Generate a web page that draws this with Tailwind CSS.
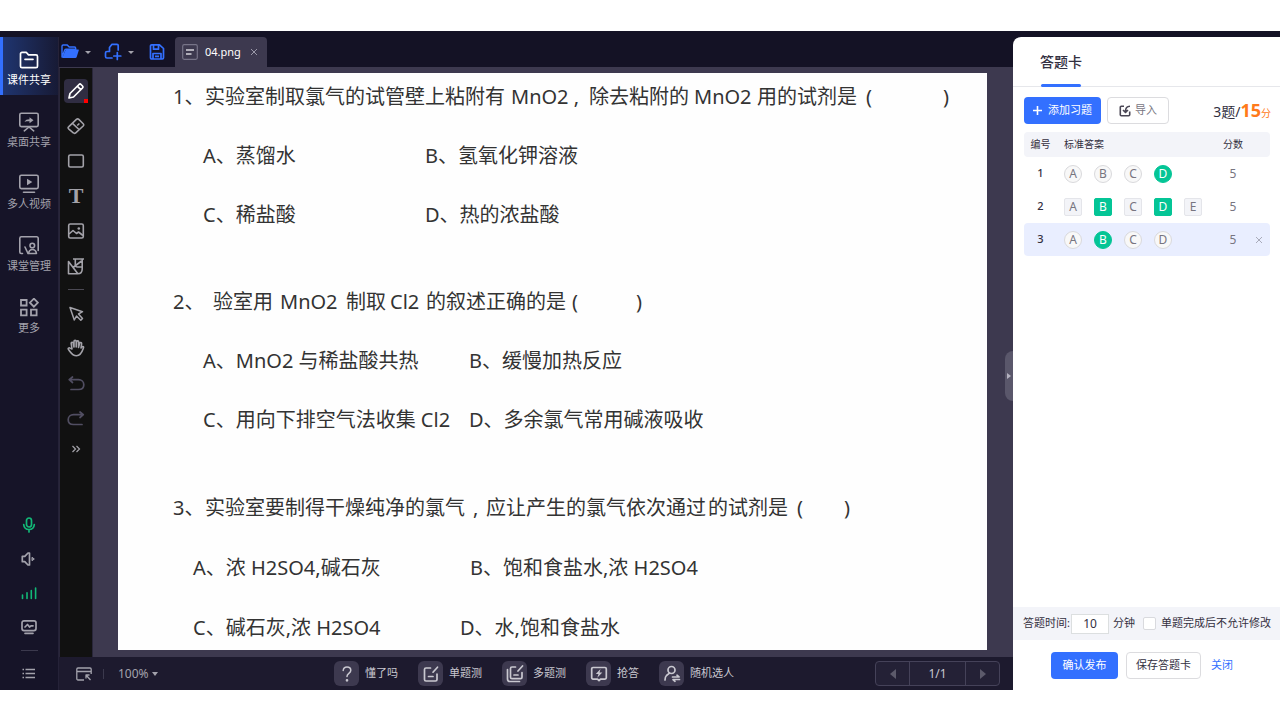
<!DOCTYPE html>
<html lang="zh-CN">
<head>
<meta charset="utf-8">
<meta name="viewport" content="width=device-width, initial-scale=1">
<title>课件共享</title>
<script src="https://cdn.jsdelivr.net/npm/@tailwindcss/browser@4"></script>
</head>
<body class="flex min-h-screen flex-col bg-white pt-[31px] pb-[30px] font-['Noto_Sans','Noto_Sans_CJK_SC',sans-serif] text-[11px]">
<div class="flex flex-1 bg-[#141225] pt-[6px]">

  <!-- Main navigation -->
  <nav class="flex w-[59px] shrink-0 flex-col border-r border-[#252238] bg-[#161428] text-[#a3a2ac]">
    <div class="flex flex-col gap-1">
      <button class="flex h-[58px] flex-col items-center gap-[2px] border-l-[3px] border-[#3370ff] bg-linear-to-r from-[#1f3570] to-[#171a35] pt-[13px] pr-[3px] leading-4 text-white">
        <svg class="h-5 w-5 shrink-0" viewBox="0 0 20 20" fill="none" stroke="currentColor" stroke-width="1.7" stroke-linejoin="round" stroke-linecap="round"><path d="M1.500 3.800a1.500 1.500 0 0 1 1.500-1.500h4.200l2.300 2.600H17a1.500 1.500 0 0 1 1.500 1.500v9.800a1.500 1.500 0 0 1-1.500 1.500H3a1.500 1.500 0 0 1-1.500-1.500zM6 9.300h8"/></svg>
        <span class="whitespace-nowrap">课件共享</span>
      </button>
      <button class="flex h-[58px] flex-col items-center gap-[2px] pt-[13px] leading-4">
        <svg class="h-5 w-5 shrink-0" viewBox="0 0 20 20" fill="none" stroke="currentColor" stroke-width="1.6" stroke-linejoin="round" stroke-linecap="round"><rect x="0.8" y="1.2" width="18.4" height="13.4" rx="1.5"/><path d="M10 15l-4.700 3.800M10 15l4.700 3.800"/><path d="M5.500 10c1-2 2.500-2.700 5-2.700V5.200L14.500 8.200l-4 3V9.200c-2 0-3.500 0-5 .8z" fill="currentColor" stroke="none"/></svg>
        <span class="whitespace-nowrap">桌面共享</span>
      </button>
      <button class="flex h-[58px] flex-col items-center gap-[2px] pt-[13px] leading-4">
        <svg class="h-5 w-5 shrink-0" viewBox="0 0 20 20" fill="none" stroke="currentColor" stroke-width="1.6" stroke-linejoin="round" stroke-linecap="round"><rect x="0.8" y="1.2" width="18.4" height="13.4" rx="1.5"/><path d="M4.500 18.300h11"/><path d="M8 4.800l5.300 3.200L8 11.200z" fill="currentColor" stroke="none"/></svg>
        <span class="whitespace-nowrap">多人视频</span>
      </button>
      <button class="flex h-[58px] flex-col items-center gap-[2px] pt-[13px] leading-4">
        <svg class="h-5 w-5 shrink-0" viewBox="0 0 20 20" fill="none" stroke="currentColor" stroke-width="1.6" stroke-linejoin="round" stroke-linecap="round"><path d="M3.500 17.500H2.300A1.500 1.500 0 0 1 .8 16V2.200A1.500 1.500 0 0 1 2.300.8h15.400a1.500 1.500 0 0 1 1.500 1.500v12.200M6 11l3 6.500"/><circle cx="13.300" cy="9.500" r="2.300"/><path d="M9.500 17.500c.5-2.800 2-4 3.900-4s3.600 1.200 4.100 4z"/></svg>
        <span class="whitespace-nowrap">课堂管理</span>
      </button>
      <button class="flex h-[58px] flex-col items-center gap-[2px] pt-[13px] leading-4">
        <svg class="h-5 w-5 shrink-0" viewBox="0 0 20 20" fill="none" stroke="currentColor" stroke-width="1.800"><path d="M2 2h5.600v5.500H2zM2 11.700h5.600v5.600H2zM12 11.700h5.600v5.600H12zM14.900.7l4 4-4 4-4-4z"/></svg>
        <span class="whitespace-nowrap">更多</span>
      </button>
    </div>
    <div class="mt-auto flex flex-col items-center gap-4 pb-[7px]">
      <button aria-label="麦克风" class="text-[#12b877]"><svg class="h-[18px] w-[18px]" viewBox="0 0 18 18" fill="none" stroke="currentColor" stroke-width="1.700" stroke-linecap="round"><rect x="6.500" y="2" width="5" height="9" rx="2.500"/><path d="M3.700 8.500c.3 3.400 2.300 5 5.300 5s5-1.600 5.300-5M9 13.500v2.500"/></svg></button>
      <button aria-label="扬声器"><svg class="h-[18px] w-[18px]" viewBox="0 0 18 18" fill="none" stroke="currentColor" stroke-width="1.700" stroke-linejoin="round" stroke-linecap="round"><path d="M2.300 6.300h2.500L8 3h1.500v12H8l-3.200-3.300H2.300z"/><path d="M12.300 7.500l2 1.500-2 1.500z" fill="currentColor" stroke-width="1"/></svg></button>
      <button aria-label="网络" class="text-[#12b877]"><svg class="h-[18px] w-[18px]" viewBox="0 0 18 18" fill="none" stroke="currentColor" stroke-width="1.600" stroke-linecap="round"><path d="M2.500 11v3.500M7 8.800v5.700M11.300 6.500v8M15.600 4v10.500"/></svg></button>
      <button aria-label="监控"><svg class="h-[18px] w-[18px]" viewBox="0 0 18 18" fill="none" stroke="currentColor" stroke-width="1.700" stroke-linejoin="round" stroke-linecap="round"><rect x="2" y="2.800" width="14" height="9.800" rx="2"/><path d="M5 9l2.500-2.500L9.500 9l1.500-1.200h2M5 15.300h8"/></svg></button>
      <hr class="-my-[2px] w-[17px] border-[#3b394d]">
      <button aria-label="列表"><svg class="h-[18px] w-[18px]" viewBox="0 0 18 18" fill="none" stroke="currentColor" stroke-width="1.500"><path d="M2.500 4.500h1.500M2.500 8.500h1.500M2.500 12.500h1.500M5.500 4.500h9.500M5.500 8.500h9.500M5.500 12.500h9.500"/></svg></button>
    </div>
  </nav>

  <!-- Workspace -->
  <main class="flex min-w-0 flex-1 flex-col">
    <header class="flex h-[30px] shrink-0 items-center text-[#3370ff]">
      <button aria-label="打开" class="ml-[2px] flex items-center gap-[6px]">
        <svg class="h-[18px] w-[18px]" viewBox="0 0 18 18"><path d="M1 14.500V3.200C1 2.500 1.500 2 2.200 2h4l2 2h5.300c.7 0 1.200.5 1.200 1.200v1H5.200c-.8 0-1.300.3-1.600 1z" fill="none" stroke="currentColor" stroke-width="1.400"/><path d="M4.800 6.500h12.500c.5 0 .7.3.5.8L15.700 14c-.2.700-.7 1-1.400 1H1.200z" fill="currentColor"/></svg>
        <svg class="h-[3px] w-[6px] text-[#a3a2ac]" viewBox="0 0 6 3"><path d="M0 0h6L3 3z" fill="currentColor"/></svg>
      </button>
      <button aria-label="新建" class="ml-[13px] flex items-center gap-[6px]">
        <svg class="h-[18px] w-[18px]" viewBox="0 0 18 18" fill="none" stroke="currentColor" stroke-width="1.700" stroke-linejoin="round" stroke-linecap="round"><path d="M8 15H3c-1 0-1.500-.5-1.500-1.500V10c0-.8.5-1.500 1.500-1.500h2.500v-4L8 1.300h5c.7 0 1.200.4 1.200 1.200V7M13.300 9.500v7M9.800 13h7"/></svg>
        <svg class="h-[3px] w-[6px] text-[#a3a2ac]" viewBox="0 0 6 3"><path d="M0 0h6L3 3z" fill="currentColor"/></svg>
      </button>
      <button aria-label="保存" class="ml-[14px]">
        <svg class="h-[18px] w-[18px]" viewBox="0 0 18 18" fill="none" stroke="currentColor" stroke-width="1.700" stroke-linejoin="round"><path d="M2.500 3c0-.7.5-1.200 1.200-1.200h7.800l4 3.700v9.300c0 .7-.5 1.200-1.200 1.200H3.700c-.7 0-1.200-.5-1.200-1.200zM5.500 2v4.200h5V2M5 16v-5.500h8V16M7 13.300h4"/></svg>
      </button>
      <div class="ml-[9px] flex h-[30px] items-center rounded-t bg-[#3d394f] pr-2 pl-[7px] text-white">
        <svg class="h-4 w-4 text-[#d5d4dc]" viewBox="0 0 16 16" fill="none" stroke="currentColor"><rect x="0.700" y="0.700" width="14.600" height="14.600" rx="1.500" stroke="#777488" stroke-width="1.200"/><path d="M4 6h8M4 10h5.500" stroke-width="1.600"/></svg>
        <span class="mr-2 ml-[7px]">04.png</span>
        <button aria-label="关闭标签" class="text-[#9a98a8]"><svg class="h-[10px] w-[10px]" viewBox="0 0 10 10" fill="none" stroke="currentColor"><path d="M2 2l6 6M8 2l-6 6"/></svg></button>
      </div>
    </header>

    <div class="flex min-h-0 flex-1 bg-[#3d394f]">
      <!-- Drawing tools -->
      <aside class="mt-px flex w-[34px] shrink-0 flex-col items-center gap-[11px] border-x border-[#29263a] bg-[#111] pt-[11px] text-[#a3a2a9]">
        <button aria-label="画笔" class="relative flex h-6 w-6 items-center justify-center rounded bg-[#302d42] text-white">
          <svg class="h-[18px] w-[18px]" viewBox="0 0 18 18" fill="none" stroke="currentColor" stroke-width="1.700" stroke-linejoin="round"><path d="M2 16l1-4.500L12 2.500c.6-.6 1.400-.6 2 0l1.500 1.500c.6.6.6 1.400 0 2L6.500 15zM10.500 4.300l3.300 3.300"/></svg>
          <span class="absolute right-0 bottom-0 h-1 w-1 bg-[#ff0000]"></span>
        </button>
        <button aria-label="橡皮" class="flex h-6 w-6 items-center justify-center"><svg class="h-[18px] w-[18px]" viewBox="0 0 18 18" fill="none" stroke="currentColor" stroke-width="1.600" stroke-linejoin="round"><path d="M1.600 9.800l7.800-7.400c.8-.7 1.700-.7 2.400 0l4.400 4.300c.7.700.7 1.600 0 2.300l-7.500 6.800c-.8.700-1.700.7-2.400 0l-4.700-4c-.7-.7-.7-1.400 0-2zM5.500 6.300l6.500 6.200M10.200 8.500l2.200-2"/></svg></button>
        <button aria-label="矩形" class="flex h-6 w-6 items-center justify-center"><svg class="h-[18px] w-[18px]" viewBox="0 0 18 18" fill="none" stroke="currentColor" stroke-width="1.600"><rect x="1.700" y="3" width="14.600" height="12" rx="1.500"/></svg></button>
        <button aria-label="文字" class="flex h-6 w-6 items-center justify-center font-['Liberation_Serif',serif] text-[22px] leading-6 font-bold">T</button>
        <button aria-label="图片" class="flex h-6 w-6 items-center justify-center"><svg class="h-[18px] w-[18px]" viewBox="0 0 18 18" fill="none" stroke="currentColor" stroke-width="1.600" stroke-linejoin="round"><rect x="1.700" y="2" width="14.600" height="14" rx="1.500"/><path d="M2 12l4-3.500 3.500 3 2-1.500 4.500 3.500"/><circle cx="11.800" cy="6.500" r="1.300" fill="currentColor" stroke="none"/></svg></button>
        <button aria-label="学科工具" class="flex h-6 w-6 items-center justify-center"><svg class="h-[18px] w-[18px]" viewBox="0 0 18 18" fill="none" stroke="currentColor" stroke-width="1.600" stroke-linejoin="round"><path d="M6 2h11M8.300 2v6c0 1.200 1 2 2.200 2h4.700M15.200 2v10c0 2.800-1.700 4.700-4.500 4.700H1.500V4.500l9.200 12M14.500 4L6 10.500"/></svg></button>
        <hr class="w-4 border-[#4b4954]">
        <button aria-label="选择" class="flex h-6 w-6 items-center justify-center"><svg class="h-[18px] w-[18px]" viewBox="0 0 18 18" fill="none" stroke="currentColor" stroke-width="1.500" stroke-linejoin="round"><path d="M3 3.500l12.500 4.200-4 2.300 4 4.500-1.700 1.800-4.300-4.300-2.200 4z"/></svg></button>
        <button aria-label="移动" class="flex h-6 w-6 items-center justify-center"><svg class="h-[18px] w-[18px]" viewBox="0 0 18 18" fill="none" stroke="currentColor" stroke-width="1.600" stroke-linejoin="round" stroke-linecap="round"><path d="M5 10L4.200 4.500c-.1-1.500 1.700-1.700 2-.3L7 8V2.500c0-1.500 2.200-1.500 2.200 0V8l.4-5.200c.2-1.400 2.200-1.200 2.100.2L11.500 8.500l1.100-4.200c.4-1.300 2.200-.9 2 .5l-.600 4.200 1-1.200c1-.8 1.900 0 1.400 1.200-1 2.800-1.900 7.700-6.900 7.700-4.200 0-5.200-2.500-8-6.200-.8-1 .5-2.200 1.600-1.400z"/></svg></button>
        <button aria-label="撤销" class="flex h-6 w-6 items-center justify-center text-[#514e62]"><svg class="h-[18px] w-[18px]" viewBox="0 0 18 18" fill="none" stroke="currentColor" stroke-width="1.700" stroke-linejoin="round" stroke-linecap="round"><path d="M5.500 3L2.200 5.700l3.300 2.800M2.500 5.700h9c3 0 5.300 2 5.300 5s-2.300 4.800-5.300 4.800H4"/></svg></button>
        <button aria-label="重做" class="flex h-6 w-6 items-center justify-center text-[#514e62]"><svg class="h-[18px] w-[18px]" viewBox="0 0 18 18" fill="none" stroke="currentColor" stroke-width="1.700" stroke-linejoin="round" stroke-linecap="round"><path d="M13 3l3.300 2.700L13 8.500M16 5.700H6.500c-3 0-5.300 2-5.300 5s2.300 4.800 5.300 4.800H15"/></svg></button>
        <button aria-label="更多工具" class="flex h-4 w-6 items-center justify-center"><svg class="h-[10px] w-[10px]" viewBox="0 0 10 10" fill="none" stroke="currentColor" stroke-width="1.200"><path d="M1.500 2l3 3-3 3M5.500 2l3 3-3 3"/></svg></button>
      </aside>

      <!-- Courseware page -->
      <div class="relative min-w-0 flex-1 pt-[6px] pr-[26px] pb-[7px] pl-[25px]">
        <article class="flex h-full flex-col gap-[57px] overflow-hidden bg-[#fefefe] pt-[9px] pl-[55px] text-xl leading-[30px] whitespace-nowrap text-[#333]">
          <section class="flex flex-col gap-[29px]">
            <h2 class="flex"><span class="w-8">1、</span><span class="w-[306px]">实验室制取氯气的试管壁上粘附有</span><span class="w-[78px]">MnO2 ,</span><span class="w-[105px]">除去粘附的</span><span class="w-[63px]">MnO2</span><span class="w-[109px]">用的试剂是</span><span class="w-[77px]">(</span><span>)</span></h2>
            <p class="flex pl-[30px]"><span class="w-[222px]">A、蒸馏水</span><span>B、氢氧化钾溶液</span></p>
            <p class="flex pl-[30px]"><span class="w-[222px]">C、稀盐酸</span><span>D、热的浓盐酸</span></p>
          </section>
          <section class="flex flex-col gap-[29px]">
            <h2 class="flex"><span class="w-10">2、</span><span class="w-[67px]">验室用</span><span class="w-[66px]">MnO2</span><span class="w-11">制取</span><span class="w-9">Cl2</span><span class="w-[146px]">的叙述正确的是</span><span class="w-16">(</span><span>)</span></h2>
            <p class="flex pl-[30px]"><span class="w-[266px]">A、MnO2 与稀盐酸共热</span><span>B、缓慢加热反应</span></p>
            <p class="flex pl-[30px]"><span class="w-[266px]">C、用向下排空气法收集 Cl2</span><span>D、多余氯气常用碱液吸收</span></p>
          </section>
          <section class="mt-px flex flex-col gap-[30px]">
            <h2 class="flex"><span class="w-8">3、</span><span class="w-[268px]">实验室要制得干燥纯净的氯气</span><span class="w-[13px]">,</span><span class="w-[222px]">应让产生的氯气依次通过</span><span class="w-[89px]">的试剂是</span><span class="w-[47px]">(</span><span>)</span></h2>
            <p class="flex pl-5"><span class="w-[277px]">A、浓 H2SO4,碱石灰</span><span>B、饱和食盐水,浓 H2SO4</span></p>
            <p class="flex pl-5"><span class="w-[267px]">C、碱石灰,浓 H2SO4</span><span>D、水,饱和食盐水</span></p>
          </section>
        </article>
        <button aria-label="收起面板" class="absolute top-[284px] right-0 flex h-[50px] w-2 items-center justify-center rounded-l-lg bg-[#5a576b] text-[#b4b2c0]"><svg class="h-[6px] w-1" viewBox="0 0 4 6"><path d="M0 0l4 3-4 3z" fill="currentColor"/></svg></button>
      </div>
    </div>

    <footer class="flex h-[33px] shrink-0 items-center bg-[#1d1a2e] text-[#c9c8d0]">
      <div class="flex flex-1 items-center pl-4 text-[#a3a2ac]">
        <button aria-label="窗口"><svg class="h-[18px] w-[18px]" viewBox="0 0 18 18" fill="none" stroke="currentColor" stroke-width="1.300" stroke-linejoin="round"><path d="M9 15H3c-.7 0-1.200-.5-1.200-1.200V4.200C1.800 3.500 2.300 3 3 3h12c.7 0 1.200.5 1.200 1.200V9M1.800 6.500h14.400M11 10l4.500 5M11 13.500V10h3.500"/></svg></button>
        <span class="mx-[10px] h-[10px] w-px bg-[#3b394d]"></span>
        <button class="ml-1 flex items-center gap-[3px] text-xs">100%<svg class="h-1 w-[6px]" viewBox="0 0 6 4"><path d="M0 0h6L3 4z" fill="currentColor"/></svg></button>
      </div>
      <div class="flex items-center gap-5 whitespace-nowrap">
        <button class="flex items-center gap-[6px]"><span class="flex h-[25px] w-[25px] items-center justify-center rounded-md bg-[#3d394f]"><svg class="h-[18px] w-[18px]" viewBox="0 0 18 18" fill="none" stroke="currentColor" stroke-width="1.500" stroke-linecap="round"><path d="M5.200 5.500C5.500 3 7 2 9 2c2.200 0 3.800 1.300 3.800 3.300C12.800 8.500 9 8.300 9 11.500"/><circle cx="9" cy="15.300" r=".6" fill="currentColor"/></svg></span>懂了吗</button>
        <button class="flex items-center gap-[6px]"><span class="flex h-[25px] w-[25px] items-center justify-center rounded-md bg-[#3d394f]"><svg class="h-[18px] w-[18px]" viewBox="0 0 18 18" fill="none" stroke="currentColor" stroke-width="1.700" stroke-linejoin="round" stroke-linecap="round"><path d="M8.500 3H4c-1 0-1.500.5-1.500 1.500v10c0 1 .5 1.500 1.500 1.500h9.500c1 0 1.500-.5 1.500-1.500V9M6.500 11.500h4.500M11 7.200l4.500-5"/></svg></span>单题测</button>
        <button class="flex items-center gap-[6px]"><span class="flex h-[25px] w-[25px] items-center justify-center rounded-md bg-[#3d394f]"><svg class="h-[18px] w-[18px]" viewBox="0 0 18 18" fill="none" stroke="currentColor" stroke-width="1.700" stroke-linejoin="round" stroke-linecap="round"><path d="M9.500 2H6c-1 0-1.500.5-1.500 1.500v8.700c0 1 .5 1.500 1.500 1.500h8.500c1 0 1.500-.5 1.500-1.500V7.500M8 10h4M12 6l4.500-5M1.500 4.500V14c0 1.500 1 2.500 2.500 2.500h9.500"/></svg></span>多题测</button>
        <button class="flex items-center gap-[6px]"><span class="flex h-[25px] w-[25px] items-center justify-center rounded-md bg-[#3d394f]"><svg class="h-[18px] w-[18px]" viewBox="0 0 18 18" fill="none" stroke="currentColor" stroke-width="1.700" stroke-linejoin="round"><path d="M3 2.500h12c.8 0 1.300.5 1.300 1.300v9c0 .8-.5 1.300-1.300 1.300h-4.500L9 15.700l-1.500-1.600H3c-.8 0-1.300-.5-1.300-1.300v-9c0-.8.5-1.300 1.300-1.300z"/><path d="M10.500 4L5.800 9h2.700L7.300 12.700 12.300 7.600H9.500z" fill="currentColor" stroke="none"/></svg></span>抢答</button>
        <button class="flex items-center gap-[6px]"><span class="flex h-[25px] w-[25px] items-center justify-center rounded-md bg-[#3d394f]"><svg class="h-[18px] w-[18px]" viewBox="0 0 18 18" fill="none" stroke="currentColor" stroke-width="1.700" stroke-linejoin="round" stroke-linecap="round"><circle cx="8.500" cy="5" r="3.500"/><path d="M6.500 8.200L3.500 10.500c-1 1-1.500 2.500-1.500 4.500M9.500 12h6.500l-2-1.800M16.500 14.500H10l2 1.800"/></svg></span>随机选人</button>
      </div>
      <div class="flex flex-1 justify-end pr-[13px] pl-[7px]">
        <div class="flex h-[25px] divide-x divide-[#454259] rounded border border-[#454259] bg-[#242136] text-xs">
          <button aria-label="上一页" class="flex w-[34px] items-center justify-center text-[#5c5a6b]"><svg class="h-[10px] w-[6px]" viewBox="0 0 6 10"><path d="M6 0v10L0 5z" fill="currentColor"/></svg></button>
          <span class="flex w-14 items-center justify-center">1/1</span>
          <button aria-label="下一页" class="flex w-[33px] items-center justify-center text-[#5c5a6b]"><svg class="h-[10px] w-[6px]" viewBox="0 0 6 10"><path d="M0 0v10l6-5z" fill="currentColor"/></svg></button>
        </div>
      </div>
    </footer>
  </main>

  <!-- Answer sheet -->
  <aside class="flex w-[267px] shrink-0 flex-col rounded-tl-lg bg-white text-[#33303f]">
    <div class="flex h-[50px] border-b border-[#e6e7eb] pl-[27px]">
      <h1 class="relative pt-[14px] text-sm leading-[22px] font-medium">答题卡<span class="absolute -bottom-px left-px h-[3px] w-10 rounded-full bg-[#3370ff]"></span></h1>
    </div>
    <div class="flex items-center pt-[10px] pr-[9px] pb-2 pl-[11px]">
      <button class="flex h-[27px] w-[77px] items-center justify-center gap-[6px] rounded bg-[#3370ff] text-white"><svg class="h-[9px] w-[9px]" viewBox="0 0 9 9" stroke="currentColor" stroke-width="1.600"><path d="M4.500 0v9M0 4.500h9"/></svg>添加习题</button>
      <button class="ml-[6px] flex h-[27px] w-[62px] items-center justify-center gap-1 rounded border border-[#dcdcdf] text-[#77757f]"><svg class="h-3 w-3 text-[#4a4755]" viewBox="0 0 12 12" fill="none" stroke="currentColor" stroke-width="1.600" stroke-linejoin="round"><path d="M5 1.300H2.300c-.6 0-1 .4-1 1v7.400c0 .6.4 1 1 1h7.400c.6 0 1-.4 1-1V6.500M11 1.300c-3 0-4.500 1.700-4.500 5.200M4 5l2.500 2.500L9 5"/></svg>导入</button>
      <p class="ml-auto flex h-[27px] items-baseline text-sm leading-[27px]">3题/<b class="text-lg leading-[27px] text-[#ff7a1a]">15</b><span class="leading-[27px] text-[10px] text-[#ff7a1a]">分</span></p>
    </div>
    <div class="pr-[10px] pl-[11px]">
      <table class="w-full table-fixed">
        <colgroup><col class="w-[33px]"><col><col class="w-[30px]"><col class="w-[22px]"></colgroup>
        <thead><tr class="h-[25px] text-[10px]">
          <th class="rounded-l bg-[#f3f4f9] font-normal" scope="col">编号</th>
          <th class="bg-[#f3f4f9] pl-[7px] text-left font-normal" scope="col">标准答案</th>
          <th class="bg-[#f3f4f9] font-normal" scope="col">分数</th>
          <td class="rounded-r bg-[#f3f4f9]"></td>
        </tr></thead>
        <tbody class="text-xs text-[#77757f]">
          <tr class="h-[33px]">
            <th class="text-[11px] font-medium text-[#33303f]" scope="row">1</th>
            <td class="pl-[7px]"><div class="flex gap-3 leading-4"><button class="h-[18px] w-[18px] rounded-full border border-[#d9d9dc] bg-[#f8f8f8]">A</button><button class="h-[18px] w-[18px] rounded-full border border-[#d9d9dc] bg-[#f8f8f8]">B</button><button class="h-[18px] w-[18px] rounded-full border border-[#d9d9dc] bg-[#f8f8f8]">C</button><button class="h-[18px] w-[18px] rounded-full border border-[#04c596] bg-[#04c596] text-white">D</button></div></td>
            <td class="text-center">5</td><td></td>
          </tr>
          <tr class="h-[33px]">
            <th class="text-[11px] font-medium text-[#33303f]" scope="row">2</th>
            <td class="pl-[7px]"><div class="flex gap-3 leading-4"><button class="h-[18px] w-[18px] rounded-xs border border-[#e4e5ea] bg-[#f3f4f8]">A</button><button class="h-[18px] w-[18px] rounded-xs border border-[#04c596] bg-[#04c596] text-white">B</button><button class="h-[18px] w-[18px] rounded-xs border border-[#e4e5ea] bg-[#f3f4f8]">C</button><button class="h-[18px] w-[18px] rounded-xs border border-[#04c596] bg-[#04c596] text-white">D</button><button class="h-[18px] w-[18px] rounded-xs border border-[#e4e5ea] bg-[#f3f4f8]">E</button></div></td>
            <td class="text-center">5</td><td></td>
          </tr>
          <tr class="h-[33px]">
            <th class="rounded-l bg-[#e9eeff] text-[11px] font-medium text-[#33303f]" scope="row">3</th>
            <td class="bg-[#e9eeff] pl-[7px]"><div class="flex gap-3 leading-4"><button class="h-[18px] w-[18px] rounded-full border border-[#d9d9dc] bg-[#f8f8f8]">A</button><button class="h-[18px] w-[18px] rounded-full border border-[#04c596] bg-[#04c596] text-white">B</button><button class="h-[18px] w-[18px] rounded-full border border-[#d9d9dc] bg-[#f8f8f8]">C</button><button class="h-[18px] w-[18px] rounded-full border border-[#d9d9dc] bg-[#f8f8f8]">D</button></div></td>
            <td class="bg-[#e9eeff] text-center">5</td>
            <td class="rounded-r bg-[#e9eeff]"><button aria-label="删除" class="flex w-full justify-center text-[#a9abba]"><svg class="h-2 w-2" viewBox="0 0 8 8" fill="none" stroke="currentColor"><path d="M1 1l6 6M7 1L1 7"/></svg></button></td>
          </tr>
        </tbody>
      </table>
    </div>
    <div class="mt-auto flex h-[33px] items-center bg-[#f3f4f9] pl-[10px] whitespace-nowrap">
      <label for="minutes">答题时间:</label>
      <input id="minutes" type="text" value="10" class="mr-1 ml-auto h-5 w-[38px] border border-[#dcdfe0] bg-white text-center text-xs">
      <span>分钟</span>
      <input id="lock" type="checkbox" class="mr-[5px] ml-2 h-[13px] w-[13px] appearance-none rounded-xs border border-[#d9dade] bg-white">
      <label for="lock" class="pr-[9px]">单题完成后不允许修改</label>
    </div>
    <div class="flex h-[50px] items-center pl-[38px]">
      <button class="h-[27px] w-[67px] rounded bg-[#3370ff] text-white">确认发布</button>
      <button class="ml-2 h-[27px] w-[75px] rounded border border-[#dcdcdf]">保存答题卡</button>
      <a href="#" class="ml-[10px] text-[#3370ff]">关闭</a>
    </div>
  </aside>
</div>
</body>
</html>
